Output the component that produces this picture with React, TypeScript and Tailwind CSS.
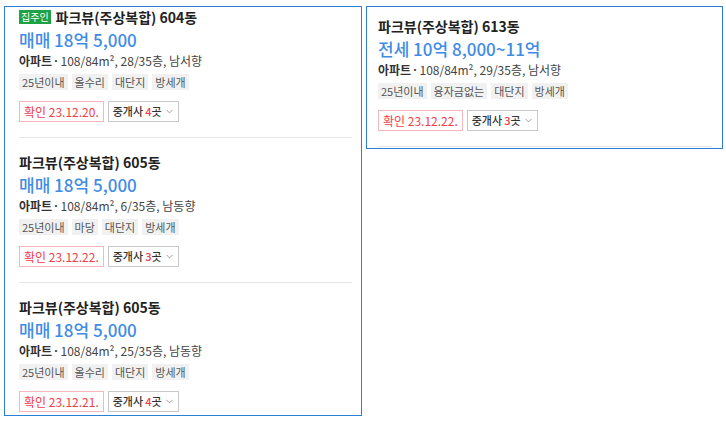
import { ChevronDown } from "lucide-react";

type Item = {
  owner?: boolean;
  title: string;
  price: string;
  info: string;
  tags: string[];
  date: string;
  count: number;
};

const leftItems: Item[] = [
  {
    owner: true,
    title: "파크뷰(주상복합) 604동",
    price: "매매 18억 5,000",
    info: "108/84m², 28/35층, 남서향",
    tags: ["25년이내", "올수리", "대단지", "방세개"],
    date: "23.12.20.",
    count: 4,
  },
  {
    title: "파크뷰(주상복합) 605동",
    price: "매매 18억 5,000",
    info: "108/84m², 6/35층, 남동향",
    tags: ["25년이내", "마당", "대단지", "방세개"],
    date: "23.12.22.",
    count: 3,
  },
  {
    title: "파크뷰(주상복합) 605동",
    price: "매매 18억 5,000",
    info: "108/84m², 25/35층, 남동향",
    tags: ["25년이내", "올수리", "대단지", "방세개"],
    date: "23.12.21.",
    count: 4,
  },
];

const rightItem: Item = {
  title: "파크뷰(주상복합) 613동",
  price: "전세 10억 8,000~11억",
  info: "108/84m², 29/35층, 남서향",
  tags: ["25년이내", "융자금없는", "대단지", "방세개"],
  date: "23.12.22.",
  count: 3,
};

function Listing({ item, compact }: { item: Item; compact?: boolean }) {
  return (
    <div
      className={`border-b border-[#e6e6e6] pb-[15px] ${
        compact ? "pt-[10px]" : "pt-[15px]"
      }`}
    >
      <div className="flex h-[18px] items-center">
        {item.owner && (
          <span className="mr-[5px] flex h-[14px] items-center bg-[#1fa245] px-[2px] text-[10px] leading-[14px] text-white">
            집주인
          </span>
        )}
        <span className="text-[14px] font-bold leading-[18px] text-[#222]">
          {item.title}
        </span>
      </div>
      <div className="mt-[3px] text-[17px] font-medium leading-[22px] text-[#3f8ce6]">
        {item.price}
      </div>
      <div className="mt-px flex text-[12px] leading-[18px] text-[#444]">
        <span className="font-bold text-[#333]">아파트</span>
        <span
          className="ml-[2px] mr-[3px] font-bold text-[#333]"
          style={{ fontFamily: '"Noto Sans", "Liberation Sans", sans-serif' }}
        >
          ·
        </span>
        <span>{item.info}</span>
      </div>
      <div className="mt-[4px] flex gap-[4px]">
        {item.tags.map((t) => (
          <span
            key={t}
            className="h-[16px] bg-[#f1f1f1] px-[3px] text-[11px] leading-[16px] text-[#555]"
          >
            {t}
          </span>
        ))}
      </div>
      <div className="mt-[11px] flex gap-[4px]">
        <span className="flex h-[21px] items-center border border-[#f7b5bd] bg-white px-[4px] text-[12px] text-[#f03e4c]">
          확인 {item.date}
        </span>
        <span className="flex h-[21px] items-center border border-[#c8c8c8] bg-white pl-[4px] pr-[3px] text-[11px] font-medium text-[#333]">
          중개사 <span className="ml-[2px] text-[#f03e4c]">{item.count}</span>곳
          <ChevronDown size={11} strokeWidth={1.5} className="ml-[2px] text-[#777]" />
        </span>
      </div>
    </div>
  );
}

export default function App() {
  return (
    <div
      className="flex h-[421px] w-[726px] items-start gap-[4px] bg-white pl-[4px] pt-[6px]"
      style={{ fontFamily: '"Noto Sans CJK KR", "Noto Sans", sans-serif' }}
    >
      <div className="h-[410px] w-[358px] overflow-hidden border border-[#2a80d6] pl-[14px] pr-[9px]">
        <div className="-mt-[14px]">
          {leftItems.map((it, i) => (
            <Listing key={i} item={it} />
          ))}
        </div>
      </div>
      <div className="w-[357px] border border-[#2a80d6] pb-px pl-[11px] pr-[10px]">
        <Listing item={rightItem} compact />
      </div>
    </div>
  );
}
